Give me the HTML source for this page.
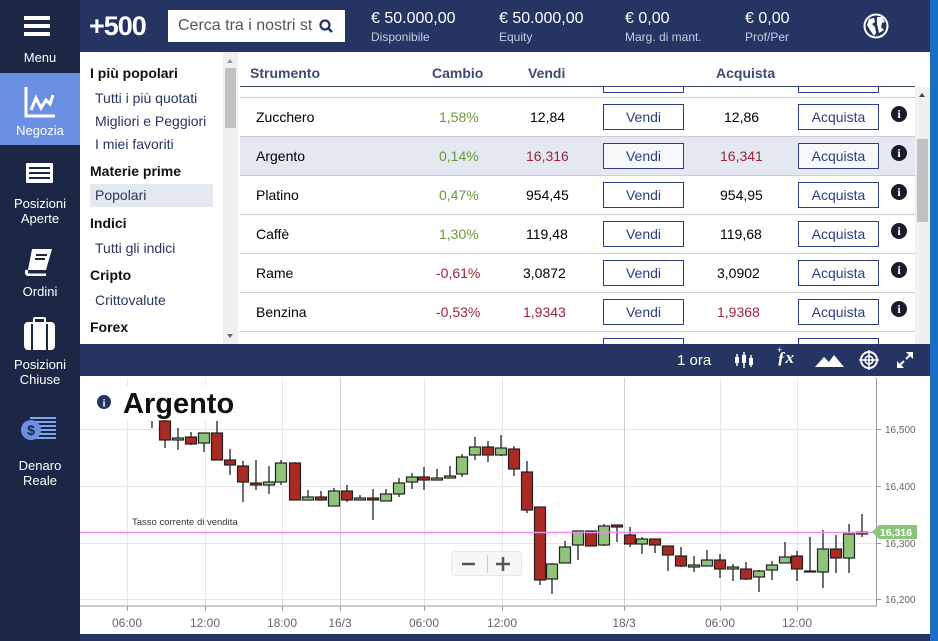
<!DOCTYPE html>
<html><head><meta charset="utf-8"><style>
*{margin:0;padding:0;box-sizing:border-box}
body{width:938px;height:641px;overflow:hidden;background:#1a6fc0;font-family:"Liberation Sans",sans-serif;position:relative}
.abs{position:absolute}
#side{left:0;top:0;width:80px;height:641px;background:#1c2645}
.si{position:absolute;left:0;width:80px;text-align:center;color:#fff;font-size:13px;line-height:15px}
#top{left:80px;top:0;width:850px;height:52px;background:#253463}
.stat{position:absolute;top:10px;color:#fff;font-size:16px}
.stat small{display:block;font-size:12px;color:#c5cde2;margin-top:2px}
#cat{left:80px;top:52px;width:143px;height:292px;background:#fff;font-size:14px;color:#2a3560}
#cat div{position:absolute;left:10px}
#cat b{color:#111}
#tbl{left:238px;top:52px;width:692px;height:292px;background:#fff;overflow:hidden}
.row{position:absolute;left:2px;width:675px;height:39px;border-bottom:1px solid #ccc;font-size:14px}
.row span{position:absolute;top:11px}
.btn{position:absolute;top:6px;height:26px;width:81px;border:1px solid #2c3d85;background:#fff;color:#2c3d85;text-align:center;line-height:24px;font-size:14px}
.g{color:#6a9a3a}.r{color:#a0223a}
.info{position:absolute;left:651px;top:8px;width:16px;height:16px;border-radius:50%;background:#1a1a2a;color:#fff;font:bold 12px/16px "Liberation Serif",serif;text-align:center}
</style></head><body>
<div id="side" class="abs">
 <div class="abs" style="left:24px;top:16px;width:26px;height:4px;background:#fff;box-shadow:0 8px 0 #fff,0 16px 0 #fff"></div>
 <div class="si" style="top:50px">Menu</div>
 <div class="abs" style="left:0;top:73px;width:80px;height:72px;background:#6b8fe3"></div>
 <svg class="abs" style="left:24px;top:86px" width="32" height="32" viewBox="0 0 32 32"><path d="M2 1V30H31" stroke="#fff" stroke-width="3" fill="none"/><path d="M7 24L12 12L17 22L22 14L26 18L29 9" stroke="#fff" stroke-width="3" fill="none"/></svg>
 <div class="si" style="top:123px">Negozia</div>
 <div class="abs" style="left:24px;top:161px;width:31px;height:24px;border:2px solid #1c2645;background:#fff;border-radius:3px"></div>
 <div class="abs" style="left:29px;top:167px;width:21px;height:2px;background:#1c2645;box-shadow:0 5px 0 #1c2645,0 10px 0 #1c2645"></div>
 <div class="si" style="top:196px">Posizioni<br>Aperte</div>
 <svg class="abs" style="left:24px;top:248px" width="32" height="28" viewBox="0 0 32 28"><path d="M8 1H28L22 22H4Z" fill="#fff"/><path d="M3 22Q1 27 6 27H22" stroke="#fff" stroke-width="3" fill="none"/><path d="M12 7H23M11 11H21" stroke="#1c2645" stroke-width="2"/></svg>
 <div class="si" style="top:284px">Ordini</div>
 <div class="abs" style="left:24px;top:322px;width:31px;height:28px;background:#fff;border-radius:4px"></div>
 <div class="abs" style="left:33px;top:317px;width:13px;height:7px;border:2px solid #fff;border-bottom:none;border-radius:2px"></div>
 <div class="abs" style="left:31px;top:324px;width:2px;height:26px;background:#1c2645;box-shadow:15px 0 0 #1c2645"></div>
 <div class="si" style="top:357px">Posizioni<br>Chiuse</div>
 <div class="abs" style="left:30px;top:417px;width:26px;height:24px;background:repeating-linear-gradient(#7ea4f0 0 2px,transparent 2px 4px)"></div>
 <div class="abs" style="left:21px;top:420px;width:20px;height:20px;border-radius:50%;background:#6b8fe3;color:#1c2645;font:bold 14px/20px 'Liberation Sans';text-align:center">$</div>
 <div class="si" style="top:458px">Denaro<br>Reale</div>
</div>
<div id="top" class="abs">
 <div class="abs" style="left:9px;top:10px;color:#fff;font:bold 27px/32px 'Liberation Sans';letter-spacing:-1px">+500</div>
 <div class="abs" style="left:88px;top:10px;width:177px;height:32px;background:#fff"><span style="position:absolute;left:10px;top:7px;font-size:16px;color:#555">Cerca tra i nostri st</span><svg style="position:absolute;left:151px;top:9px" width="14" height="14"><circle cx="6" cy="6" r="4.5" stroke="#253463" stroke-width="2.2" fill="none"/><path d="M9 9L13 13" stroke="#253463" stroke-width="2.5"/></svg></div>
 <div class="stat" style="left:291px">€ 50.000,00<small>Disponibile</small></div>
 <div class="stat" style="left:419px">€ 50.000,00<small>Equity</small></div>
 <div class="stat" style="left:545px">€ 0,00<small>Marg. di mant.</small></div>
 <div class="stat" style="left:665px">€ 0,00<small>Prof/Per</small></div>
 <svg class="abs" style="left:783px;top:13px" width="26" height="26" viewBox="0 0 26 26"><circle cx="13" cy="13" r="11.5" stroke="#fff" stroke-width="2" fill="none"/><path d="M6 6L11 5L12 9L9 11L12 14L13 20L11 23L7 17L4 12Z M14 4L19 4L22 9L19 10L18 14L21 17L16 20L15 15L14 11Z" fill="#fff"/></svg>
</div>
<div id="cat" class="abs">
 <div style="top:13px"><b>I più popolari</b></div>
 <div style="top:38px;left:15px">Tutti i più quotati</div>
 <div style="top:61px;left:15px">Migliori e Peggiori</div>
 <div style="top:84px;left:15px">I miei favoriti</div>
 <div style="top:111px"><b>Materie prime</b></div>
 <div style="top:132px;left:10px;width:123px;height:23px;background:#e4e9f1"></div>
 <div style="top:135px;left:15px">Popolari</div>
 <div style="top:163px"><b>Indici</b></div>
 <div style="top:188px;left:15px">Tutti gli indici</div>
 <div style="top:215px"><b>Cripto</b></div>
 <div style="top:240px;left:15px">Crittovalute</div>
 <div style="top:267px"><b>Forex</b></div>
</div>
<div class="abs" style="left:223px;top:52px;width:15px;height:292px;background:#f0f0f0"><div style="position:absolute;left:2px;top:16px;width:11px;height:60px;background:#c1c1c1"></div><div style="position:absolute;left:4px;top:7px;border:3px solid transparent;border-bottom:4px solid #999;border-top:none"></div><div style="position:absolute;left:4px;top:282px;border:3px solid transparent;border-top:4px solid #666;border-bottom:none"></div></div>
<div id="tbl" class="abs">
 <div style="position:absolute;left:12px;top:13px;font:bold 14px 'Liberation Sans';color:#3c4a7a">Strumento</div>
 <div style="position:absolute;left:194px;top:13px;font:bold 14px 'Liberation Sans';color:#3c4a7a">Cambio</div>
 <div style="position:absolute;left:290px;top:13px;font:bold 14px 'Liberation Sans';color:#3c4a7a">Vendi</div>
 <div style="position:absolute;left:478px;top:13px;font:bold 14px 'Liberation Sans';color:#3c4a7a">Acquista</div>
 <div style="position:absolute;left:2px;top:34px;width:675px;height:1px;background:#3c4a7a"></div>
 <div style="position:absolute;left:2px;top:45px;width:675px;height:1px;background:#ccc"></div>
 <div style="position:absolute;left:365px;top:35px;width:81px;height:6px;border:1px solid #2c3d85;border-top:none"></div>
 <div style="position:absolute;left:560px;top:35px;width:81px;height:6px;border:1px solid #2c3d85;border-top:none"></div>
 <div class="row" style="top:46px"><span style="left:16px">Zucchero</span><span class="g" style="left:199px">1,58%</span><span style="left:290px">12,84</span><div class="btn" style="left:363px">Vendi</div><span style="left:484px">12,86</span><div class="btn" style="left:558px">Acquista</div><div class="info">i</div></div>
 <div class="row" style="top:85px;background:#e4e9f1"><span style="left:16px">Argento</span><span class="g" style="left:199px">0,14%</span><span class="r" style="left:286px">16,316</span><div class="btn" style="left:363px;background:#f6f8fa">Vendi</div><span class="r" style="left:480px">16,341</span><div class="btn" style="left:558px;background:#f6f8fa">Acquista</div><div class="info">i</div></div>
 <div class="row" style="top:124px"><span style="left:16px">Platino</span><span class="g" style="left:199px">0,47%</span><span style="left:286px">954,45</span><div class="btn" style="left:363px">Vendi</div><span style="left:480px">954,95</span><div class="btn" style="left:558px">Acquista</div><div class="info">i</div></div>
 <div class="row" style="top:163px"><span style="left:16px">Caffè</span><span class="g" style="left:199px">1,30%</span><span style="left:286px">119,48</span><div class="btn" style="left:363px">Vendi</div><span style="left:480px">119,68</span><div class="btn" style="left:558px">Acquista</div><div class="info">i</div></div>
 <div class="row" style="top:202px"><span style="left:16px">Rame</span><span class="r" style="left:196px">-0,61%</span><span style="left:283px">3,0872</span><div class="btn" style="left:363px">Vendi</div><span style="left:477px">3,0902</span><div class="btn" style="left:558px">Acquista</div><div class="info">i</div></div>
 <div class="row" style="top:241px"><span style="left:16px">Benzina</span><span class="r" style="left:196px">-0,53%</span><span class="r" style="left:283px">1,9343</span><div class="btn" style="left:363px">Vendi</div><span class="r" style="left:477px">1,9368</span><div class="btn" style="left:558px">Acquista</div><div class="info">i</div></div>
 <div class="row" style="top:280px;border:none"><div class="btn" style="left:363px">Vendi</div><div class="btn" style="left:558px">Acquista</div></div>
 <div style="position:absolute;left:677px;top:35px;width:15px;height:257px;background:#f0f0f0"><div style="position:absolute;left:2px;top:52px;width:11px;height:83px;background:#c1c1c1"></div><div style="position:absolute;left:4px;top:6px;border:3px solid transparent;border-bottom:4px solid #444;border-top:none"></div></div>
</div>
<div class="abs" style="left:80px;top:344px;width:850px;height:32px;background:#253463;color:#fff">
 <span style="position:absolute;left:597px;top:8px;font-size:15px">1 ora</span>
 <svg style="position:absolute;left:654px;top:6px" width="20" height="20"><path d="M3 4V16M10 2V18M17 5V17" stroke="#fff" stroke-width="1.5"/><rect x="1" y="7" width="4" height="6" fill="#fff"/><rect x="8" y="5" width="4" height="8" fill="#fff"/><rect x="15" y="8" width="4" height="7" fill="#fff"/></svg>
 <span style="position:absolute;left:697px;top:4px;font:italic bold 17px 'Liberation Serif'">ƒx</span><span style="position:absolute;left:697px;top:1px;font-size:9px">+</span>
 <svg style="position:absolute;left:735px;top:8px" width="30" height="16"><path d="M0 15L9 5L14 10L19 3L29 15Z" fill="#fff"/></svg>
 <svg style="position:absolute;left:778px;top:5px" width="22" height="22"><circle cx="11" cy="11" r="8" stroke="#fff" stroke-width="2" fill="none"/><circle cx="11" cy="11" r="4" stroke="#fff" stroke-width="1.5" fill="none"/><path d="M11 1V21M1 11H21" stroke="#fff" stroke-width="1.5"/></svg>
 <svg style="position:absolute;left:816px;top:7px" width="18" height="18"><path d="M2 16L8 10M10 8L16 2" stroke="#fff" stroke-width="2"/><path d="M1 10V17H8Z M10 1H17V8Z" fill="#fff"/></svg>
</div>
<div class="abs" style="left:80px;top:376px;width:850px;height:258px;background:#fff">
<svg width="850" height="258" viewBox="80 376 850 258" style="font-family:'Liberation Sans'">
<g stroke="#e6e6e6" stroke-width="1">
<path d="M80 429.5H876M80 486.5H876M80 543.5H876M80 599.5H876"/>
<path d="M127.5 378V605M205.5 378V605M282.5 378V605M424.5 378V605M502.5 378V605M720.5 378V605M797.5 378V605"/>
</g>
<path d="M340.5 378V605M624.5 378V605" stroke="#d0d0d0"/>
<path d="M876.5 378V606H80" stroke="#999" fill="none"/>
<g stroke="#999"><path d="M876 429.5h5M876 486.5h5M876 543.5h5M876 599.5h5M127.5 606v5M205.5 606v5M282.5 606v5M340.5 606v5M424.5 606v5M502.5 606v5M624.5 606v5M720.5 606v5M797.5 606v5"/></g>
<g font-size="10" fill="#666"><text x="885" y="433">16,500</text><text x="885" y="490">16,400</text><text x="885" y="547">16,300</text><text x="885" y="603">16,200</text></g>
<g font-size="12" fill="#666" text-anchor="middle"><text x="127" y="627">06:00</text><text x="205" y="627">12:00</text><text x="282" y="627">18:00</text><text x="340" y="627">16/3</text><text x="424" y="627">06:00</text><text x="502" y="627">12:00</text><text x="624" y="627">18/3</text><text x="720" y="627">06:00</text><text x="797" y="627">12:00</text></g>
<g stroke="#222" stroke-width="1.3">
<path d="M152 421V428M165 419V448M178 428V450M191 432V445M204 433V452M217 421V460M230 449V475M243 461V502M256 460V490M269 466V494M281 460V485M295 462V500M308 490V500M321 491V500M334 488V506M347 485V502M360 495V500M373 489V520M386 489V501M399 478V497M412 473V489M424 467V490M437 469V480M450 466V478M462 454V477M475 437V460M488 441V462M501 435V456M514 446V476M527 461V513M540 507V585M552 563V594M565 541V560M578 531V560M591 531V546M604 524V546M617 525V542M630 527V547M642 537V554M655 539V553M668 546V571M681 547V567M694 556V572M707 550V566M720 554V578M733 564V581M746 562V580M759 570V592M772 561V580M785 542V563M797 551V581M810 537V572M823 530V588M836 535V573M849 524V573M862 514V537"/>
</g>
<g stroke="#222" stroke-width="1.2">
<g fill="#a82a22">
<rect x="159.5" y="421" width="11" height="19"/><rect x="185.5" y="437" width="11" height="7"/><rect x="211.5" y="433" width="11" height="27"/><rect x="224.5" y="460" width="11" height="5"/><rect x="237.5" y="466" width="11" height="16"/><rect x="250.5" y="483" width="11" height="2"/><rect x="289.5" y="463" width="11" height="37"/><rect x="315.5" y="497" width="11" height="3"/><rect x="341.5" y="491" width="11" height="9"/><rect x="367.5" y="498" width="11" height="2"/><rect x="418.5" y="477" width="11" height="3"/><rect x="482.5" y="447" width="11" height="8"/><rect x="508.5" y="449" width="11" height="20"/><rect x="521.5" y="472" width="11" height="38"/><rect x="534.5" y="507" width="11" height="73"/><rect x="585.5" y="531" width="11" height="15"/><rect x="611.5" y="525" width="11" height="2"/><rect x="624.5" y="535" width="11" height="9"/><rect x="649.5" y="539" width="11" height="6"/><rect x="662.5" y="546" width="11" height="9"/><rect x="675.5" y="556" width="11" height="10"/><rect x="714.5" y="560" width="11" height="9"/><rect x="740.5" y="569" width="11" height="10"/><rect x="791.5" y="556" width="11" height="13"/><rect x="830.5" y="549" width="11" height="9"/><rect x="856.5" y="532" width="11" height="2"/>
</g>
<g fill="#8fc47a">
<rect x="172.5" y="438" width="11" height="2"/><rect x="198.5" y="433" width="11" height="10"/><rect x="263.5" y="482" width="11" height="3"/><rect x="275.5" y="463" width="11" height="19"/><rect x="302.5" y="497" width="11" height="3"/><rect x="328.5" y="491" width="11" height="15"/><rect x="354.5" y="498" width="11" height="2"/><rect x="380.5" y="494" width="11" height="7"/><rect x="393.5" y="483" width="11" height="11"/><rect x="406.5" y="477" width="11" height="5"/><rect x="431.5" y="478" width="11" height="2"/><rect x="444.5" y="476" width="11" height="2"/><rect x="456.5" y="457" width="11" height="17"/><rect x="469.5" y="447" width="11" height="8"/><rect x="495.5" y="448" width="11" height="7"/><rect x="546.5" y="564" width="11" height="15"/><rect x="559.5" y="547" width="11" height="16"/><rect x="572.5" y="531" width="11" height="14"/><rect x="598.5" y="526" width="11" height="19"/><rect x="636.5" y="539" width="11" height="5"/><rect x="688.5" y="565" width="11" height="2"/><rect x="701.5" y="560" width="11" height="6"/><rect x="727.5" y="567" width="11" height="2"/><rect x="753.5" y="571" width="11" height="6"/><rect x="766.5" y="565" width="11" height="5"/><rect x="779.5" y="557" width="11" height="6"/><rect x="804.5" y="571" width="11" height="1"/><rect x="817.5" y="549" width="11" height="23"/><rect x="843.5" y="534" width="11" height="24"/>
</g></g>
<path d="M80 532.5H876" stroke="#f08ae8" stroke-width="1.5"/>
<path d="M872 532L879 525H917V539H879Z" fill="#8cc57a"/>
<text x="880" y="536" font-size="10.5" font-weight="bold" fill="#fff">16,316</text>
<text x="132" y="525" font-size="9.5" fill="#333">Tasso corrente di vendita</text>
<rect x="451.5" y="551.5" width="70" height="24" rx="3" fill="#f7f7f7" stroke="#e8e8e8"/>
<path d="M462 564H475M496 564H510M503 557V571" stroke="#555" stroke-width="2.5"/><path d="M487.5 555V573" stroke="#ccc"/>
<circle cx="104" cy="402" r="7" fill="#253463"/><text x="104" y="406.5" font-size="10" font-weight="bold" fill="#fff" text-anchor="middle" font-family="Liberation Serif">i</text>
<rect x="118" y="386" width="120" height="34" fill="#fff"/>
<text x="123" y="413" font-size="29" font-weight="bold" fill="#111">Argento</text>
</svg>
</div>
<div class="abs" style="left:80px;top:634px;width:850px;height:7px;background:#253463"></div>
</body></html>
